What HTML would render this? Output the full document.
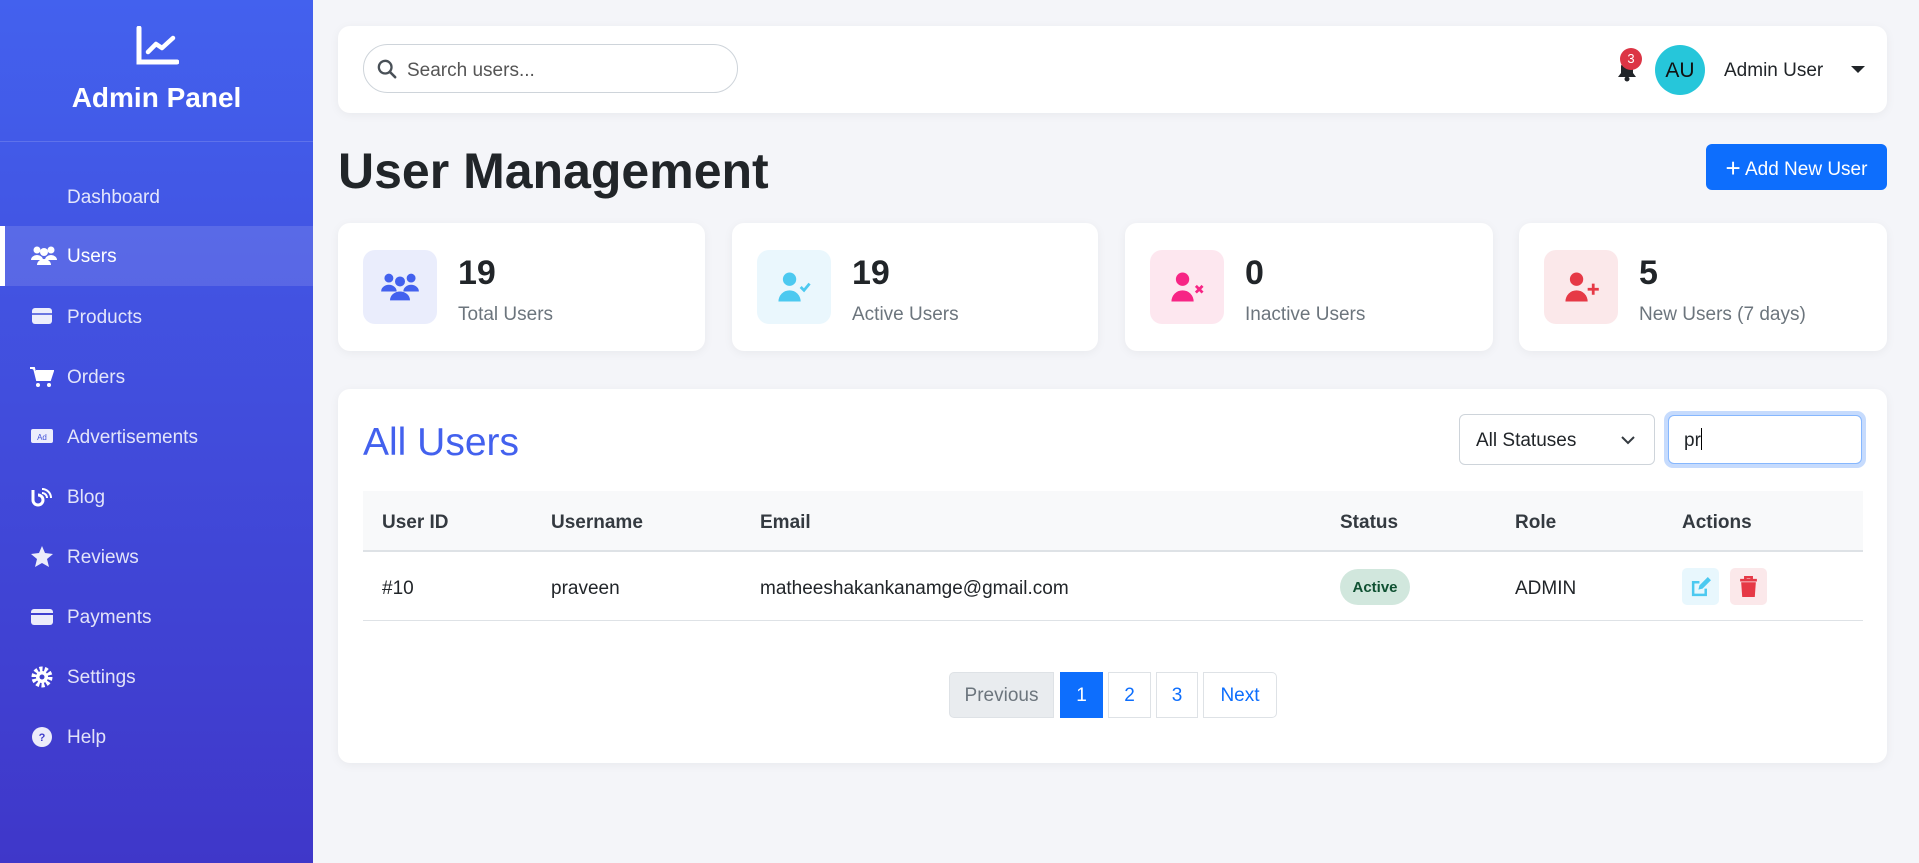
<!DOCTYPE html>
<html><head><meta charset="utf-8"><style>
*{box-sizing:border-box;margin:0;padding:0}
body{width:1919px;height:863px;overflow:hidden;background:#f4f5f9;font-family:"Liberation Sans",sans-serif;position:relative;color:#212529}
.sb{position:absolute;left:0;top:0;width:313px;height:863px;background:linear-gradient(180deg,#4361ee 0%,#3f37c9 100%)}
.sb .logo{position:absolute;top:26px;left:0;width:313px;text-align:center}
.sb h1{position:absolute;top:82px;width:313px;text-align:center;color:#fff;font-size:28px;font-weight:bold}
.sb .div{position:absolute;top:141px;left:0;width:313px;height:1px;background:rgba(255,255,255,.15)}
.nav{position:absolute;left:0;width:313px;height:60px;color:rgba(255,255,255,.85);font-size:19px;line-height:62px}
.nav span{position:absolute;left:67px}
.nav svg{position:absolute;left:30px;top:19px}
.nav.act{background:rgba(255,255,255,.12);color:#fff;box-shadow:inset 5px 0 0 #fff}
.card{position:absolute;background:#fff;border-radius:12px;box-shadow:0 2px 10px rgba(0,0,0,.05)}
.sc .ib{position:absolute;left:25px;top:27px;width:74px;height:74px;border-radius:12px}
.sc .ib svg{position:absolute;left:17px;top:17px}
.sc .n{position:absolute;left:120px;top:31px;font-size:34px;font-weight:bold}
.sc .l{position:absolute;left:120px;top:81px;font-size:19px;color:#6c757d}
.th{position:absolute;top:491px;left:363px;width:1500px;height:61px;background:#f8f9fa;border-bottom:2px solid #dee2e6}
.c{position:absolute;font-size:19px}
.hd{font-weight:bold;color:#343a40;top:21px}
.pg{position:absolute;top:672px;height:46px;border:1px solid #dee2e6;font-size:19px;line-height:46px;text-align:center;color:#0d6efd;background:#fff}
</style></head><body>
<div class="sb">
 <div class="logo"><svg width="44" height="40" viewBox="0 0 44 40"><path d="M4 2V36H42" fill="none" stroke="#fff" stroke-width="5" stroke-linecap="round"/><path d="M13 26L21 18L27 22L38 12" fill="none" stroke="#fff" stroke-width="4.5" stroke-linecap="round" stroke-linejoin="round"/></svg></div>
 <h1>Admin Panel</h1>
 <div class="div"></div>
 <div class="nav" style="top:167px"><span>Dashboard</span></div>
 <div class="nav act" style="top:226px"><svg width="28" height="22" viewBox="0 0 26 22"><circle cx="6" cy="5" r="3.5" fill="#fff"/><circle cx="20" cy="5" r="3.5" fill="#fff"/><circle cx="13" cy="7" r="4" fill="#fff"/><path d="M0 15a6 5 0 0 1 12 0zM14 15a6 5 0 0 1 12 0zM6 20a7 6 0 0 1 14 0z" fill="#fff"/></svg><span>Users</span></div>
 <div class="nav" style="top:287px"><svg width="24" height="22" viewBox="0 0 24 22"><rect x="2" y="2" width="20" height="16" rx="3" fill="#fff" opacity=".9"/><path d="M2 8H22" stroke="#3f4fd8" stroke-width="1.5"/></svg><span>Products</span></div>
 <div class="nav" style="top:347px"><svg width="24" height="22" viewBox="0 0 24 22"><path d="M0 2H4L7 14H20L23 5H6" fill="#fff" stroke="#fff" stroke-width="2"/><circle cx="8" cy="19" r="2" fill="#fff"/><circle cx="19" cy="19" r="2" fill="#fff"/></svg><span>Orders</span></div>
 <div class="nav" style="top:407px"><svg width="24" height="22" viewBox="0 0 24 22"><rect x="1" y="3" width="22" height="14" rx="2" fill="#fff" opacity=".9"/><text x="12" y="14" font-size="8" text-anchor="middle" fill="#4050d8" font-family="Liberation Sans">Ad</text></svg><span>Advertisements</span></div>
 <div class="nav" style="top:467px"><svg width="24" height="22" viewBox="0 0 24 22"><path d="M3 4V14a5 5 0 1 0 5-5" fill="none" stroke="#fff" stroke-width="3"/><path d="M12 3a9 9 0 0 1 9 9M12 7a5 5 0 0 1 5 5" fill="none" stroke="#fff" stroke-width="2"/></svg><span>Blog</span></div>
 <div class="nav" style="top:527px"><svg width="24" height="22" viewBox="0 0 24 22"><path d="M12 0L15 7L23 8L17 13L19 21L12 17L5 21L7 13L1 8L9 7Z" fill="#fff" opacity=".9"/></svg><span>Reviews</span></div>
 <div class="nav" style="top:587px"><svg width="24" height="22" viewBox="0 0 24 22"><rect x="1" y="3" width="22" height="16" rx="3" fill="#fff" opacity=".9"/><path d="M1 8H23" stroke="#4040d0" stroke-width="2"/></svg><span>Payments</span></div>
 <div class="nav" style="top:647px"><svg width="24" height="22" viewBox="0 0 24 22"><circle cx="12" cy="11" r="8" fill="none" stroke="#fff" stroke-width="5" stroke-dasharray="3 2"/><circle cx="12" cy="11" r="6" fill="#fff"/><circle cx="12" cy="11" r="2.5" fill="#3f40cc"/></svg><span>Settings</span></div>
 <div class="nav" style="top:707px"><svg width="24" height="22" viewBox="0 0 24 22"><circle cx="12" cy="11" r="10" fill="#fff" opacity=".9"/><text x="12" y="15" font-size="11" text-anchor="middle" fill="#3f3dca" font-family="Liberation Sans" font-weight="bold">?</text></svg><span>Help</span></div>
</div>

<div class="card" style="left:338px;top:26px;width:1549px;height:87px"></div>
<div style="position:absolute;left:363px;top:44px;width:375px;height:49px;border:1px solid #ced4da;border-radius:25px;background:#fff"></div>
<svg style="position:absolute;left:377px;top:59px" width="20" height="20" viewBox="0 0 22 22"><circle cx="9" cy="9" r="7" fill="none" stroke="#495057" stroke-width="2.5"/><path d="M14 14L20 20" stroke="#495057" stroke-width="2.8" stroke-linecap="round"/></svg>
<div style="position:absolute;left:407px;top:60px;font-size:19px;color:#555">Search users...</div>
<svg style="position:absolute;left:1617px;top:60px" width="20" height="22" viewBox="0 0 20 22"><path d="M10 1a6 6 0 0 0-6 6v6l-3 4h18l-3-4V7a6 6 0 0 0-6-6z" fill="#212529"/><circle cx="10" cy="19" r="2.5" fill="#212529"/></svg>
<div style="position:absolute;left:1620px;top:48px;width:22px;height:22px;border-radius:50%;background:#dc3545;color:#fff;font-size:13px;text-align:center;line-height:22px">3</div>
<div style="position:absolute;left:1655px;top:45px;width:50px;height:50px;border-radius:50%;background:#26c6da;color:#111;font-size:21px;text-align:center;line-height:52px">AU</div>
<div style="position:absolute;left:1724px;top:60px;font-size:19px">Admin User</div>
<div style="position:absolute;left:1851px;top:66px;border-left:7px solid transparent;border-right:7px solid transparent;border-top:7px solid #212529"></div>

<div style="position:absolute;left:338px;top:142px;font-size:50px;font-weight:bold;color:#212529">User Management</div>
<div style="position:absolute;left:1706px;top:144px;width:181px;height:46px;background:#0d6efd;border-radius:6px;color:#fff;font-size:19px;line-height:48px;text-align:center"><b style="font-size:26px;font-weight:normal;vertical-align:-2px">+</b> Add New User</div>

<div class="card sc" style="left:338px;top:223px;width:367px;height:128px"><div class="ib" style="background:#eaedfc"><svg width="40" height="40" viewBox="0 0 36 36"><circle cx="8" cy="10" r="4" fill="#4361ee"/><circle cx="28" cy="10" r="4" fill="#4361ee"/><circle cx="18" cy="13" r="4.5" fill="#4361ee"/><path d="M1 22a7 6 0 0 1 14 0zM21 22a7 6 0 0 1 14 0zM9 30a9 8 0 0 1 18 0z" fill="#4361ee"/></svg></div><div class="n">19</div><div class="l">Total Users</div></div>
<div class="card sc" style="left:732px;top:223px;width:366px;height:128px"><div class="ib" style="background:#eaf7fd"><svg width="40" height="40" viewBox="0 0 36 36"><circle cx="14" cy="11" r="6" fill="#4cc9f0"/><path d="M4 31a10 10 0 0 1 20 0z" fill="#4cc9f0"/><path d="M24 18L27 21L32 15" fill="none" stroke="#4cc9f0" stroke-width="2.5"/></svg></div><div class="n">19</div><div class="l">Active Users</div></div>
<div class="card sc" style="left:1125px;top:223px;width:368px;height:128px"><div class="ib" style="background:#fde7ef"><svg width="40" height="40" viewBox="0 0 36 36"><circle cx="14" cy="11" r="6" fill="#f72585"/><path d="M4 31a10 10 0 0 1 20 0z" fill="#f72585"/><path d="M26 17L32 23M32 17L26 23" stroke="#f72585" stroke-width="2.5"/></svg></div><div class="n">0</div><div class="l">Inactive Users</div></div>
<div class="card sc" style="left:1519px;top:223px;width:368px;height:128px"><div class="ib" style="background:#fbe8ea"><svg width="40" height="40" viewBox="0 0 36 36"><circle cx="14" cy="11" r="6" fill="#e63946"/><path d="M4 31a10 10 0 0 1 20 0z" fill="#e63946"/><path d="M29 15V25M24 20H34" stroke="#e63946" stroke-width="2.5"/></svg></div><div class="n">5</div><div class="l">New Users (7 days)</div></div>

<div class="card" style="left:338px;top:389px;width:1549px;height:374px"></div>
<div style="position:absolute;left:363px;top:421px;font-size:39px;color:#4361ee">All Users</div>
<div style="position:absolute;left:1459px;top:414px;width:196px;height:51px;border:1px solid #ced4da;border-radius:6px;background:#fff;font-size:19px;line-height:51px;padding-left:16px">All Statuses</div>
<svg style="position:absolute;left:1621px;top:435px" width="14" height="10" viewBox="0 0 14 10"><path d="M1 2L7 8L13 2" fill="none" stroke="#343a40" stroke-width="2"/></svg>
<div style="position:absolute;left:1664px;top:411px;width:202px;height:57px;border-radius:9px;background:#c6dbfd"></div>
<div style="position:absolute;left:1668px;top:415px;width:194px;height:49px;border:1px solid #86b7fe;border-radius:6px;background:#fff;font-size:19px;line-height:49px;padding-left:15px">pr<span style="display:inline-block;width:1px;height:22px;background:#000;vertical-align:-4px"></span></div>

<div class="th">
 <div class="c hd" style="left:19px">User ID</div><div class="c hd" style="left:188px">Username</div><div class="c hd" style="left:397px">Email</div><div class="c hd" style="left:977px">Status</div><div class="c hd" style="left:1152px">Role</div><div class="c hd" style="left:1319px">Actions</div>
</div>
<div style="position:absolute;left:363px;top:552px;width:1500px;height:69px;border-bottom:1px solid #dee2e6">
 <div class="c" style="left:19px;top:26px">#10</div><div class="c" style="left:188px;top:26px">praveen</div><div class="c" style="left:397px;top:26px">matheeshakankanamge@gmail.com</div>
 <div class="c" style="left:977px;top:17px;width:70px;height:36px;border-radius:18px;background:#d1e7dd;color:#0f5132;font-size:15px;font-weight:bold;text-align:center;line-height:37px">Active</div>
 <div class="c" style="left:1152px;top:26px">ADMIN</div>
 <div class="c" style="left:1319px;top:16px;width:37px;height:37px;border-radius:5px;background:#e8f7fd"><svg style="position:absolute;left:8px;top:8px" width="22" height="22" viewBox="0 0 21 21"><path d="M15 12V18H3V6H9" fill="none" stroke="#4cc9f0" stroke-width="2.4"/><path d="M8 13L9 9L17 1L20 4L12 12Z" fill="#4cc9f0"/></svg></div>
 <div class="c" style="left:1367px;top:16px;width:37px;height:37px;border-radius:5px;background:#fbe8ea"><svg style="position:absolute;left:9px;top:8px" width="19" height="22" viewBox="0 0 18 21"><path d="M1 4H17M6 4V1H12V4" stroke="#e63946" stroke-width="2.5" fill="none"/><path d="M2 6H16L15 20H3Z" fill="#e63946"/></svg></div>
</div>

<div class="pg" style="left:949px;width:105px;background:#e9ecef;color:#6c757d;border-radius:5px 0 0 5px">Previous</div>
<div class="pg" style="left:1060px;width:43px;background:#0d6efd;border-color:#0d6efd;color:#fff">1</div>
<div class="pg" style="left:1108px;width:43px">2</div>
<div class="pg" style="left:1156px;width:42px">3</div>
<div class="pg" style="left:1203px;width:74px;border-radius:0 5px 5px 0">Next</div>
</body></html>
